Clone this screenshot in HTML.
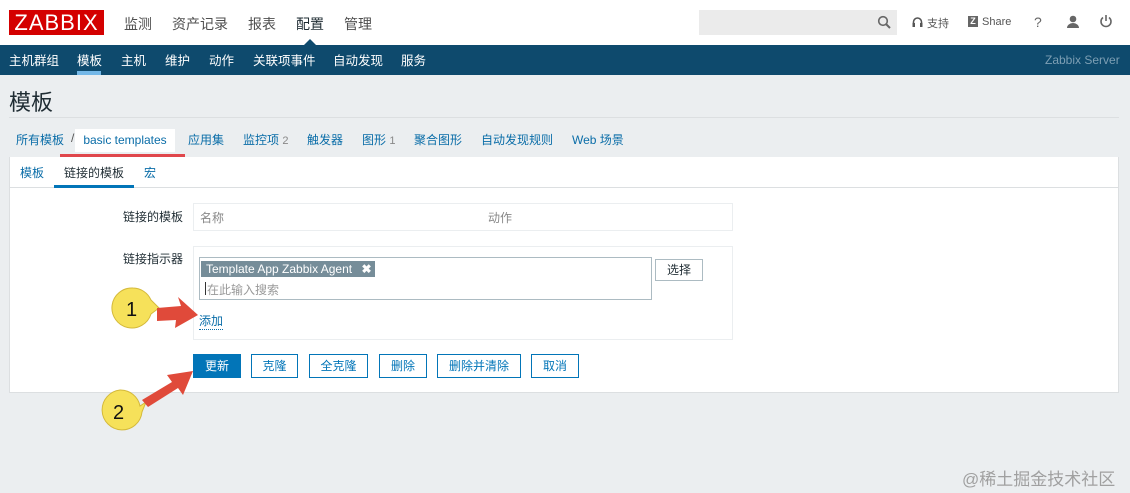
<!DOCTYPE html>
<html><head><meta charset="utf-8"><style>
*{margin:0;padding:0;box-sizing:border-box}
body{width:1130px;height:493px;background:#ebeef0;font-family:"Liberation Sans","Noto Sans CJK SC",sans-serif;position:relative;overflow:hidden;font-size:12px;color:#1f2c33}
.a{position:absolute}
.top{left:0;top:0;width:1130px;height:45px;background:#fff}
.logo{left:9px;top:10px;width:95px;height:25px;background:#d40000;color:#fff;font-size:22px;line-height:25px;text-align:center;letter-spacing:1px}
.mm{top:14px;font-size:14px;color:#4f4f4f}
.nav{left:0;top:45px;width:1130px;height:30px;background:#0e4a6d}
.nav span{position:absolute;top:5px;color:#fff;font-size:12.5px}
.lnk{color:#0a6da8}
.btn{position:absolute;top:354px;height:24px;border:1px solid #0275b8;color:#0275b8;background:#fff;text-align:center;line-height:22px;font-size:12px}
</style></head><body>
<div class="a top"></div>
<div class="a logo">ZABBIX</div>
<span class="a mm" style="left:124px">监测</span>
<span class="a mm" style="left:172px">资产记录</span>
<span class="a mm" style="left:248px">报表</span>
<span class="a mm" style="left:296px;color:#1f2c33">配置</span>
<span class="a mm" style="left:344px">管理</span>
<div class="a" style="left:303px;top:39px;width:0;height:0;border-left:7px solid transparent;border-right:7px solid transparent;border-bottom:7px solid #0e4a6d"></div>
<div class="a" style="left:699px;top:10px;width:198px;height:25px;background:#ebebeb"></div>
<svg class="a" style="left:877px;top:15px" width="14" height="14"><circle cx="6" cy="6" r="4.3" fill="none" stroke="#666" stroke-width="1.6"/><line x1="9" y1="9" x2="13" y2="13" stroke="#666" stroke-width="2"/></svg>
<svg class="a" style="left:912px;top:16px" width="11" height="12"><path d="M1.5 9V6a4 4 0 0 1 8 0v3" fill="none" stroke="#555" stroke-width="1.6"/><rect x="0.5" y="7" width="2.5" height="4" fill="#555"/><rect x="8" y="7" width="2.5" height="4" fill="#555"/></svg>
<span class="a" style="left:927px;top:15px;color:#555;font-size:11px">支持</span>
<div class="a" style="left:968px;top:16px;width:10px;height:11px;background:#666;color:#fff;font-size:9px;line-height:11px;text-align:center;font-weight:bold">Z</div>
<span class="a" style="left:982px;top:16px;color:#555;font-size:11px">Share</span>
<span class="a" style="left:1034px;top:14px;color:#666;font-size:14px">?</span>
<svg class="a" style="left:1066px;top:15px" width="14" height="14"><circle cx="7" cy="4" r="3.3" fill="#666"/><path d="M1 13a6 5 0 0 1 12 0z" fill="#666"/></svg>
<svg class="a" style="left:1099px;top:14px" width="14" height="14"><path d="M4 3.5A5 5 0 1 0 10 3.5" fill="none" stroke="#666" stroke-width="1.6"/><line x1="7" y1="1" x2="7" y2="7" stroke="#666" stroke-width="1.6"/></svg>
<div class="a nav">
<span style="left:9px">主机群组</span><span style="left:77px">模板</span><span style="left:121px">主机</span><span style="left:165px">维护</span><span style="left:209px">动作</span><span style="left:253px">关联项事件</span><span style="left:333px">自动发现</span><span style="left:401px">服务</span>
<span style="left:1045px;top:8px;color:#7d9fb4;font-size:12px">Zabbix Server</span>
</div>
<div class="a" style="left:77px;top:71px;width:24px;height:4px;background:#74b8e8"></div>
<span class="a" style="left:9px;top:85px;font-size:22px;color:#1f2c33">模板</span>
<div class="a" style="left:9px;top:117px;width:1110px;height:1px;background:#dcdfe1"></div>
<span class="a lnk" style="left:16px;top:131px">所有模板</span>
<span class="a" style="left:71px;top:131px;color:#555">/</span>
<div class="a" style="left:75px;top:129px;width:100px;height:23px;background:#fff;color:#0a6da8;line-height:22px;text-align:center">basic templates</div>
<div class="a" style="left:60px;top:154px;width:125px;height:4px;background:#e0474c"></div>
<span class="a lnk" style="left:188px;top:131px">应用集</span>
<span class="a lnk" style="left:243px;top:131px">监控项 <span style="color:#888;font-size:11px">2</span></span>
<span class="a lnk" style="left:307px;top:131px">触发器</span>
<span class="a lnk" style="left:362px;top:131px">图形 <span style="color:#888;font-size:11px">1</span></span>
<span class="a lnk" style="left:414px;top:131px">聚合图形</span>
<span class="a lnk" style="left:481px;top:131px">自动发现规则</span>
<span class="a lnk" style="left:572px;top:131px">Web 场景</span>
<div class="a" style="left:9px;top:157px;width:1110px;height:236px;background:#fff;border:1px solid #dcdfe1;border-top:none"></div>
<div class="a" style="left:9px;top:187px;width:1110px;height:1px;background:#dcdfe1"></div>
<span class="a lnk" style="left:20px;top:164px">模板</span>
<span class="a" style="left:64px;top:164px">链接的模板</span>
<span class="a lnk" style="left:144px;top:164px">宏</span>
<div class="a" style="left:54px;top:185px;width:80px;height:3px;background:#0275b8"></div>
<span class="a" style="left:123px;top:208px;color:#1f2c33">链接的模板</span>
<div class="a" style="left:193px;top:203px;width:540px;height:28px;border:1px solid #ebeef0"></div>
<span class="a" style="left:200px;top:209px;color:#888">名称</span>
<span class="a" style="left:488px;top:209px;color:#888">动作</span>
<span class="a" style="left:123px;top:250px">链接指示器</span>
<div class="a" style="left:193px;top:246px;width:540px;height:94px;border:1px solid #ebeef0"></div>
<div class="a" style="left:199px;top:257px;width:453px;height:43px;border:1px solid #acbbc2"></div>
<div class="a" style="left:201px;top:261px;width:174px;height:16px;background:#768d99;color:#fff;line-height:16px;padding-left:5px">Template App Zabbix Agent <b style="margin-left:6px">✖</b></div>
<div class="a" style="left:205px;top:282px;width:1px;height:13px;background:#333"></div>
<span class="a" style="left:207px;top:281px;color:#999">在此输入搜索</span>
<div class="a" style="left:655px;top:259px;width:48px;height:22px;border:1px solid #acbbc2;background:#fff;text-align:center;line-height:20px">选择</div>
<span class="a lnk" style="left:199px;top:312px;border-bottom:1px dotted #0a6da8">添加</span>
<div class="btn" style="left:193px;width:48px;background:#0275b8;color:#fff">更新</div>
<div class="btn" style="left:251px;width:47px">克隆</div>
<div class="btn" style="left:309px;width:59px">全克隆</div>
<div class="btn" style="left:379px;width:48px">删除</div>
<div class="btn" style="left:437px;width:84px">删除并清除</div>
<div class="btn" style="left:531px;width:48px">取消</div>
<svg class="a" style="left:0;top:0" width="1130" height="493">
<path d="M133 288a20 20 0 0 1 18 12l8 8-8 6a20 20 0 1 1 -18 -26z" fill="#f6e15a" stroke="#d4b93a"/>
<text x="126" y="316" font-family="Liberation Sans" font-size="20" fill="#111">1</text>
<path d="M157 308l24 -2 -3 -9 20 18 -23 13 1 -8 -19 1z" fill="#e04a3a"/>
<path d="M120 390a20 20 0 0 1 20 16l6 -4-4 10a20 20 0 1 1 -22 -22z" fill="#f6e15a" stroke="#d4b93a"/>
<text x="113" y="419" font-family="Liberation Sans" font-size="20" fill="#111">2</text>
<path d="M142 400l30 -18 -5 -7 26 -4 -10 24 -5 -7 -30 19z" fill="#e04a3a"/>
</svg>
<span class="a" style="left:962px;top:465px;color:#a0a0a0;font-size:17px">@稀土掘金技术社区</span>
</body></html>
